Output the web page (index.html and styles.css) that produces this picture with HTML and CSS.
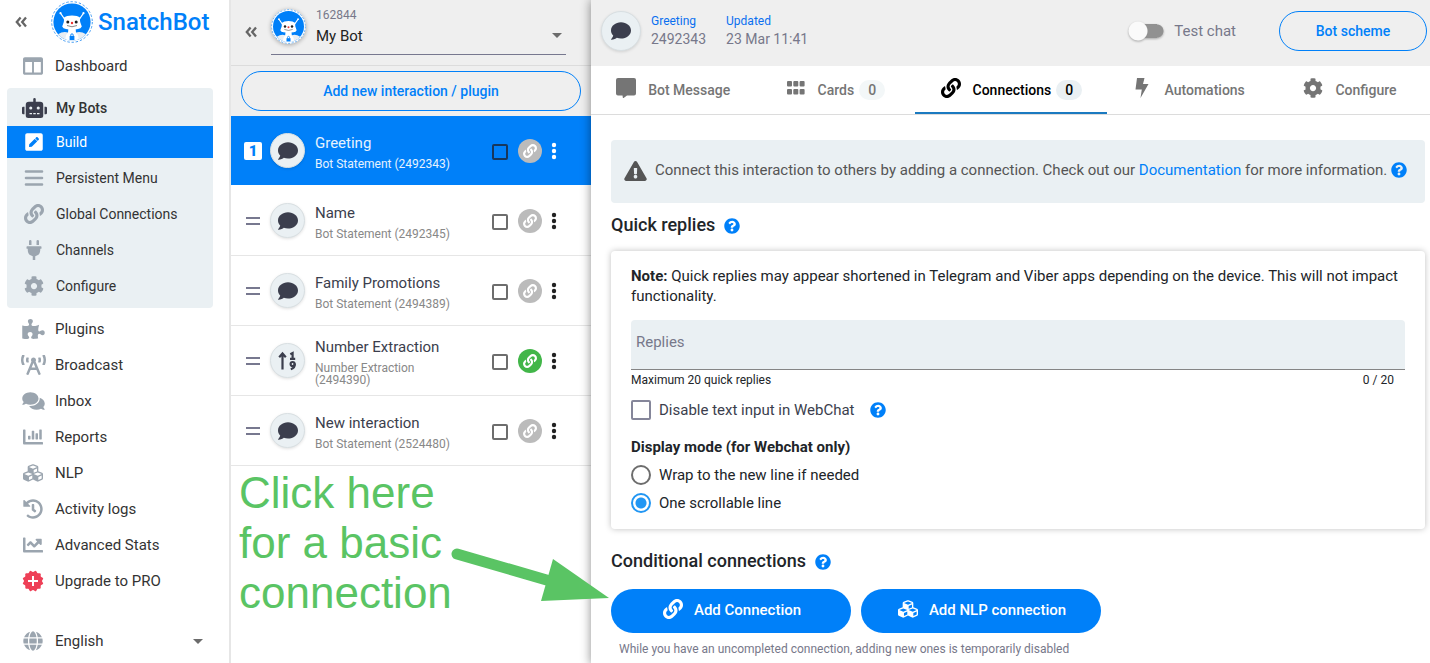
FILE: index.html
```html
<!DOCTYPE html>
<html lang="en">
<head>
<meta charset="utf-8">
<title>SnatchBot – Connections</title>
<link rel="stylesheet" href="styles.css">
</head>
<body>
<svg class="sprite" aria-hidden="true">
  <symbol id="logo" viewBox="0 0 42 42">
    <circle cx="21" cy="21" r="20.300" fill="#fff" stroke="#2b8ff0" stroke-width=".9" stroke-dasharray="2.400 1.850"/>
    <circle cx="21" cy="21" r="18.600" fill="#0080f9"/>
    <path d="M7 33.200Q12 30 17 31.500L25 31.500Q30 30 35 33.200Q29.500 39.600 21 39.600T7 33.200Z" fill="#e9eef3"/>
    <path d="M17.500 26h7l.5 6Q27.500 33 27.500 38Q24.500 39.600 21 39.600T14.500 38Q14.500 33 17 32Z" fill="#fff"/>
    <path d="M13.500 18L9.700 12.500M28.500 18L32.300 12.500" stroke="#fff" stroke-width="1.300"/>
    <circle cx="9.500" cy="12.200" r="1.100" fill="#fff"/><circle cx="32.500" cy="12.200" r="1.100" fill="#fff"/>
    <path d="M12.800 16.800Q15.500 14.500 21 14.500T29.200 16.800Q28.800 19 29.200 21L30.800 25.500Q30 27.800 27 28Q21 29 15 28Q12 27.800 11.200 25.500L12.800 21Q13.200 19 12.800 16.800Z" fill="#fff"/>
    <circle cx="16.800" cy="21" r="1.500" fill="#222"/><circle cx="25.200" cy="21" r="1.500" fill="#222"/>
    <circle cx="21" cy="22" r="1.200" fill="#e33"/>
    <path d="M16 24.500Q21 27 26 24.500" fill="none" stroke="#555" stroke-width=".7"/>
    <rect x="18.600" y="35" width="4.800" height="4" fill="#0080f9"/><path d="M19.800 35v-1a1.200 1.200 0 0 1 2.400 0V35" fill="none" stroke="#0080f9" stroke-width=".9"/>
  </symbol>
  <symbol id="collapse" viewBox="0 0 12 12"><path d="M5.600 1.500L1.800 6l3.800 4.500M11 1.500L7.200 6l3.800 4.500" fill="none" stroke="currentColor" stroke-width="2.300"/></symbol>
  <symbol id="caret" viewBox="0 0 10 5"><path d="M0 0h10L5 5z" fill="currentColor"/></symbol>
  <symbol id="columns" viewBox="0 0 512 512"><path fill="currentColor" d="M464 32H48C21.490 32 0 53.490 0 80v352c0 26.510 21.490 48 48 48h416c26.510 0 48-21.490 48-48V80c0-26.510-21.490-48-48-48zM232 424H56V152h176v272zm224 0H280V152h176v272z"/></symbol>
  <symbol id="robot" viewBox="0 0 640 512"><path fill="currentColor" d="M32 224H64V416H32A32 32 0 0 1 0 384V256A32 32 0 0 1 32 224ZM544 176V448a64 64 0 0 1-64 64H160a64 64 0 0 1-64-64V176a80 80 0 0 1 80-80H288V32a32 32 0 0 1 64 0V96H464A80 80 0 0 1 544 176ZM264 256a40 40 0 1 0-40 40A40 40 0 0 0 264 256Zm-8 128H192v32h64Zm96 0H288v32h64ZM456 256a40 40 0 1 0-40 40A40 40 0 0 0 456 256Zm-8 128H384v32h64ZM640 256V384a32 32 0 0 1-32 32H576V224h32A32 32 0 0 1 640 256Z"/></symbol>
  <symbol id="pen" viewBox="0 0 448 512"><path fill="currentColor" d="M400 480H48c-26.500 0-48-21.500-48-48V80c0-26.500 21.500-48 48-48h352c26.500 0 48 21.500 48 48v352c0 26.500-21.500 48-48 48zM238.100 177.900L102.400 313.600l-6.300 57.100c-.8 7.600 5.600 14.100 13.300 13.300l57.100-6.300L302.200 242c2.300-2.300 2.300-6.100 0-8.500L246.700 178c-2.500-2.400-6.300-2.400-8.600-.1zM345 165.100L314.900 135c-9.400-9.400-24.600-9.400-33.900 0l-23.100 23.100c-2.300 2.300-2.300 6.100 0 8.500l55.500 55.500c2.300 2.300 6.100 2.300 8.500 0L345 199c9.300-9.300 9.300-24.500 0-33.900z"/></symbol>
  <symbol id="bars" viewBox="0 0 20 20"><path d="M2 3.500h16M2 10h16M2 16.500h16" stroke="currentColor" stroke-width="2.600" stroke-linecap="round"/></symbol>
  <symbol id="link" viewBox="0 0 512 512"><path fill="currentColor" d="M326.612 185.391c59.747 59.809 58.927 155.698.36 214.590-.11.120-.24.250-.36.370l-67.200 67.200c-59.270 59.270-155.699 59.262-214.960 0-59.270-59.260-59.270-155.700 0-214.960l37.106-37.106c9.840-9.840 26.786-3.300 27.294 10.606.648 17.722 3.826 35.527 9.690 52.721 1.986 5.822.567 12.262-3.783 16.612l-13.087 13.087c-28.026 28.026-28.905 73.660-1.155 101.960 28.024 28.579 74.086 28.749 102.325.510l67.200-67.190c28.191-28.191 28.073-73.757 0-101.830-3.701-3.694-7.429-6.564-10.341-8.569a16.037 16.037 0 0 1-6.947-12.606c-.396-10.567 3.348-21.456 11.698-29.806l21.054-21.055c5.521-5.521 14.182-6.199 20.584-1.731a152.482 152.482 0 0 1 20.522 17.197zM467.547 44.449c-59.261-59.262-155.690-59.270-214.960 0l-67.200 67.200c-.12.120-.25.250-.36.370-58.566 58.892-59.387 154.781.360 214.590a152.454 152.454 0 0 0 20.521 17.196c6.402 4.468 15.064 3.789 20.584-1.731l21.054-21.055c8.350-8.350 12.094-19.239 11.698-29.806a16.037 16.037 0 0 0-6.947-12.606c-2.912-2.005-6.640-4.875-10.341-8.569-28.073-28.073-28.191-73.639 0-101.830l67.200-67.190c28.239-28.239 74.300-28.069 102.325.510 27.750 28.300 26.872 73.934-1.155 101.960l-13.087 13.087c-4.350 4.350-5.769 10.790-3.783 16.612 5.864 17.194 9.042 34.999 9.690 52.721.509 13.906 17.454 20.446 27.294 10.606l37.106-37.106c59.271-59.259 59.271-155.699.001-214.959z"/></symbol>
  <symbol id="plug" viewBox="0 0 384 512"><path fill="currentColor" d="M320 32a32 32 0 0 0-64 0v96h64Zm48 128H16A16 16 0 0 0 0 176v32a16 16 0 0 0 16 16H32v32A160 160 0 0 0 160 412.800V512h64V412.800A160 160 0 0 0 352 256V224h16a16 16 0 0 0 16-16V176A16 16 0 0 0 368 160ZM128 32a32 32 0 0 0-64 0v96h64Z"/></symbol>
  <symbol id="cog" viewBox="0 0 512 512"><path fill="currentColor" d="M487.400 315.700l-42.600-24.600c4.300-23.200 4.300-47 0-70.200l42.600-24.600c4.900-2.800 7.100-8.600 5.500-14-11.100-35.600-30-67.800-54.700-94.600-3.800-4.100-10-5.100-14.800-2.300L380.800 110c-17.900-15.400-38.500-27.300-60.800-35.100V25.800c0-5.600-3.900-10.500-9.400-11.700-36.700-8.200-74.300-7.800-109.200 0-5.500 1.200-9.400 6.100-9.400 11.700V75c-22.200 7.900-42.800 19.800-60.800 35.100L88.700 85.500c-4.900-2.800-11-1.900-14.800 2.300-24.700 26.700-43.600 58.900-54.700 94.600-1.700 5.400.6 11.200 5.500 14L67.300 221c-4.300 23.200-4.300 47 0 70.200l-42.600 24.600c-4.900 2.800-7.100 8.600-5.500 14 11.100 35.600 30 67.800 54.700 94.600 3.800 4.100 10 5.100 14.800 2.300l42.600-24.600c17.900 15.400 38.500 27.300 60.800 35.100v49.200c0 5.600 3.900 10.500 9.400 11.700 36.700 8.200 74.300 7.800 109.200 0 5.500-1.200 9.400-6.100 9.400-11.700v-49.200c22.200-7.900 42.800-19.800 60.800-35.100l42.600 24.600c4.900 2.800 11 1.900 14.800-2.300 24.700-26.700 43.600-58.900 54.700-94.600 1.500-5.500-.7-11.300-5.600-14.100zM256 336c-44.100 0-80-35.900-80-80s35.900-80 80-80 80 35.900 80 80-35.900 80-80 80z"/></symbol>
  <symbol id="puzzle" viewBox="0 0 576 512"><path fill="currentColor" d="M519.442 288.651c-41.519 0-59.500 31.593-82.058 31.593C377.409 320.244 432 144 432 144s-196.288 80-196.288-3.297c0-35.827 36.288-46.250 36.288-85.985C272 19.216 243.885 0 210.539 0c-34.654 0-66.366 18.891-66.366 56.346 0 41.364 31.711 59.277 31.711 81.750C175.885 207.719 0 166.758 0 166.758v333.237s178.635 41.047 178.635-28.662c0-22.473-40-40.107-40-81.471 0-37.456 29.250-56.346 63.577-56.346 33.673 0 61.788 19.216 61.788 54.717 0 39.735-36.288 50.158-36.288 85.985 0 60.803 129.675 25.730 181.230 25.730 0 0-34.725-120.101 25.827-120.101 35.962 0 46.423 36.152 86.308 36.152C556.712 416 576 387.990 576 354.443c0-34.199-18.962-65.792-56.558-65.792z"/></symbol>
  <symbol id="tower" viewBox="0 0 640 512"><path fill="currentColor" d="M150.940 192h33.730c11.010 0 18.610-10.830 14.860-21.180-4.930-13.580-7.550-27.980-7.550-42.820s2.620-29.240 7.550-42.820C203.290 74.830 195.680 64 184.670 64h-33.730c-7.010 0-13.460 4.490-15.410 11.230C130.640 92.210 128 109.880 128 128c0 18.120 2.640 35.790 7.540 52.760 1.940 6.740 8.390 11.240 15.400 11.240zM89.920 23.340C95.560 12.720 87.970 0 75.960 0H40.630c-6.270 0-12.140 3.590-14.740 9.310C9.400 45.540 0 85.650 0 128c0 24.750 3.120 68.330 26.690 118.860 2.620 5.630 8.420 9.140 14.610 9.140h34.840c12.020 0 19.610-12.740 13.950-23.370-49.780-93.320-16.710-178.150-.17-209.290zM614.060 9.290C611.460 3.580 605.600 0 599.330 0h-35.420c-11.980 0-19.660 12.660-14.020 23.250 18.270 34.290 48.420 119.420.280 209.230-5.720 10.680 1.800 23.520 13.910 23.520h35.230c6.270 0 12.130-3.580 14.730-9.290C630.570 210.480 640 170.360 640 128s-9.420-82.480-25.940-118.710zM489.060 64h-33.730c-11.010 0-18.610 10.830-14.860 21.180 4.930 13.580 7.550 27.980 7.550 42.820s-2.620 29.240-7.550 42.820c-3.760 10.350 3.850 21.180 14.860 21.180h33.730c7.020 0 13.460-4.490 15.410-11.240 4.900-16.970 7.530-34.640 7.530-52.760 0-18.120-2.640-35.790-7.540-52.760-1.940-6.750-8.390-11.240-15.400-11.240zm-116.300 100.120c7.050-10.290 11.200-22.710 11.200-36.120 0-35.350-28.630-64-63.960-64-35.320 0-63.960 28.650-63.960 64 0 13.410 4.150 25.830 11.200 36.120l-130.500 313.410c-3.400 8.150.460 17.520 8.610 20.920l29.510 12.310c8.150 3.400 17.520-.46 20.910-8.610L244.960 384h150.070l49.200 118.150c3.400 8.160 12.760 12.010 20.910 8.610l29.510-12.310c8.150-3.400 12-12.770 8.610-20.920l-130.500-313.410zM271.620 320L320 203.810 368.380 320h-96.760z"/></symbol>
  <symbol id="comments" viewBox="0 0 576 512"><path fill="currentColor" d="M416 192c0-88.400-93.100-160-208-160S0 103.600 0 192c0 34.300 14.100 65.900 38 92-13.400 30.200-35.500 54.200-35.800 54.500-2.200 2.300-2.800 5.700-1.500 8.700S4.800 352 8 352c36.600 0 66.900-12.300 88.700-25 32.200 15.700 70.300 25 111.300 25 114.900 0 208-71.600 208-160zm122 220c23.900-26 38-57.700 38-92 0-66.900-53.500-124.200-129.300-148.100.9 6.600 1.300 13.300 1.300 20.100 0 105.900-107.700 192-240 192-10.800 0-21.300-.8-31.700-1.900C207.800 439.600 281.800 480 368 480c41 0 79.100-9.200 111.300-25 21.800 12.700 52.100 25 88.700 25 3.200 0 6.100-1.900 7.300-4.800 1.300-2.900.7-6.300-1.500-8.700-.3-.3-22.400-24.200-35.800-54.500z"/></symbol>
  <symbol id="chart" viewBox="0 0 512 512"><path fill="currentColor" d="M332.800 320h38.400c6.400 0 12.800-6.400 12.800-12.800V172.800c0-6.400-6.400-12.800-12.800-12.800h-38.400c-6.400 0-12.800 6.400-12.800 12.800v134.400c0 6.400 6.400 12.800 12.800 12.800zm96 0h38.400c6.400 0 12.800-6.400 12.800-12.800V76.800c0-6.400-6.400-12.800-12.800-12.800h-38.400c-6.400 0-12.800 6.400-12.800 12.800v230.400c0 6.400 6.400 12.800 12.800 12.800zm-288 0h38.400c6.400 0 12.800-6.400 12.800-12.800v-70.400c0-6.400-6.400-12.800-12.800-12.800h-38.400c-6.400 0-12.800 6.400-12.800 12.800v70.400c0 6.400 6.400 12.800 12.800 12.800zm96 0h38.400c6.400 0 12.800-6.400 12.800-12.800V108.800c0-6.400-6.400-12.800-12.800-12.800h-38.400c-6.400 0-12.800 6.400-12.800 12.800v198.400c0 6.400 6.400 12.800 12.800 12.800zM496 384H64V80c0-8.840-7.160-16-16-16H16C7.160 64 0 71.160 0 80v336c0 17.670 14.330 32 32 32h464c8.840 0 16-7.160 16-16v-32c0-8.840-7.160-16-16-16z"/></symbol>
  <symbol id="trend" viewBox="0 0 512 512"><path fill="currentColor" d="M496 384H64V80c0-8.840-7.160-16-16-16H16C7.160 64 0 71.160 0 80v336c0 17.670 14.330 32 32 32h464c8.840 0 16-7.160 16-16v-32c0-8.840-7.160-16-16-16zM464 96H345.940c-21.380 0-32.090 25.850-16.970 40.970l32.400 32.400L288 242.750l-73.370-73.370c-12.500-12.500-32.760-12.500-45.250 0l-68.690 68.690c-6.250 6.250-6.250 16.380 0 22.630l22.620 22.620c6.250 6.250 16.380 6.250 22.630 0L192 237.250l73.370 73.370c12.500 12.500 32.760 12.500 45.250 0l96-96 32.400 32.400c15.120 15.120 40.970 4.410 40.970-16.970V112c.010-8.840-7.150-16-15.990-16z"/></symbol>
  <symbol id="cubes" viewBox="0 0 512 512"><path fill="currentColor" d="M488.600 250.200L392 214V105.500c0-15-9.300-28.400-23.400-33.700l-100-37.500c-8.100-3.100-17.100-3.100-25.300 0l-100 37.500c-14.100 5.300-23.400 18.700-23.400 33.700V214l-96.600 36.200C9.300 255.500 0 268.900 0 283.900V394c0 13.600 7.700 26.100 19.900 32.200l100 50c10.100 5.100 22.100 5.100 32.200 0l103.900-52 103.900 52c10.100 5.100 22.100 5.100 32.200 0l100-50c12.200-6.100 19.900-18.600 19.900-32.200V283.900c0-15-9.300-28.400-23.400-33.700zM358 214.800l-85 31.900v-68.200l85-37v73.300zM154 104.100l102-38.200 102 38.200v.6l-102 41.400-102-41.400v-.6zm84 291.100l-85 42.500v-79.100l85-38.800v75.400zm0-112l-102 41.400-102-41.400v-.6l102-38.200 102 38.200v.6zm240 112l-85 42.500v-79.100l85-38.800v75.400zm0-112l-102 41.400-102-41.400v-.6l102-38.200 102 38.200v.6z"/></symbol>
  <symbol id="history" viewBox="0 0 512 512"><path fill="currentColor" d="M504 255.531c.253 136.640-111.180 248.372-247.820 248.468-59.015.042-113.223-20.530-155.822-54.911-11.077-8.940-11.905-25.541-1.839-35.607l11.267-11.267c8.609-8.609 22.353-9.551 31.891-1.984C173.062 425.135 212.781 440 256 440c101.705 0 184-82.311 184-184 0-101.705-82.311-184-184-184-48.814 0-93.149 18.969-126.068 49.932l50.754 50.754c10.080 10.080 2.941 27.314-11.313 27.314H24c-8.837 0-16-7.163-16-16V38.627c0-14.254 17.234-21.393 27.314-11.314l49.372 49.372C129.209 34.136 189.552 8 256 8c136.810 0 247.747 110.780 248 247.531zm-180.912 78.784l9.823-12.630c8.138-10.463 6.253-25.542-4.210-33.679L288 256.349V152c0-13.255-10.745-24-24-24h-16c-13.255 0-24 10.745-24 24v135.651l65.409 50.874c10.463 8.137 25.541 6.253 33.679-4.210z"/></symbol>
  <symbol id="pro" viewBox="0 0 22 22"><g fill="#ee4057"><rect x="3.300" y="3.300" width="15.400" height="15.400" rx="1"/><rect x="3.300" y="3.300" width="15.400" height="15.400" rx="1" transform="rotate(30 11 11)"/><rect x="3.300" y="3.300" width="15.400" height="15.400" rx="1" transform="rotate(60 11 11)"/></g><path d="M11 6v10M6 11h10" stroke="#fff" stroke-width="2"/></symbol>
  <symbol id="globe" viewBox="0 0 496 512"><path fill="currentColor" d="M336.500 160C322 70.700 287.800 8 248 8s-74 62.700-88.500 152h177zM152 256c0 22.200 1.200 43.500 3.300 64h185.300c2.100-20.500 3.300-41.800 3.300-64s-1.200-43.500-3.300-64H155.300c-2.100 20.500-3.300 41.800-3.300 64zm324.700-96c-28.600-67.900-86.500-120.400-158-141.600 24.400 33.800 41.200 84.700 50 141.600h108zM177.200 18.400C105.800 39.600 47.800 92.100 19.300 160h108c8.700-56.900 25.500-107.800 49.900-141.600zM487.400 192H372.700c2.100 21 3.300 42.500 3.300 64s-1.200 43-3.300 64h114.600c5.500-20.500 8.600-41.800 8.600-64s-3.100-43.500-8.500-64zM120 256c0-21.500 1.200-43 3.300-64H8.600C3.200 212.500 0 233.800 0 256s3.200 43.500 8.600 64h114.600c-2-21-3.200-42.500-3.200-64zm39.500 96c14.500 89.300 48.700 152 88.500 152s74-62.700 88.500-152h-177zm159.300 141.600c71.400-21.200 129.400-73.700 158-141.600h-108c-8.800 56.900-25.600 107.800-50 141.600zM19.300 352c28.600 67.900 86.500 120.400 158 141.600-24.400-33.800-41.200-84.700-50-141.600h-108z"/></symbol>
  <symbol id="comment" viewBox="0 0 512 512"><path fill="currentColor" d="M256 32C114.600 32 0 125.100 0 240c0 49.600 21.400 95 57 130.700C44.500 421.100 2.700 466 2.200 466.500c-2.200 2.300-2.800 5.700-1.500 8.700S4.800 480 8 480c66.300 0 116-31.800 140.600-51.400 32.700 12.300 69 19.400 107.400 19.400 141.400 0 256-93.100 256-208S397.400 32 256 32z"/></symbol>
  <symbol id="sort" viewBox="0 0 20 20"><path d="M4.500 18.500V3.500M1.200 6.200L4.500 2.500 7.800 6.200" fill="none" stroke="currentColor" stroke-width="2.200"/><path d="M12.300 3.200L14.600 2V7.600M12 7.800h5.200" fill="none" stroke="currentColor" stroke-width="2.200"/><circle cx="14.600" cy="13" r="2" fill="none" stroke="currentColor" stroke-width="2.200"/><path d="M16.800 12.500Q17 17 12.800 18.200" fill="none" stroke="currentColor" stroke-width="2.200"/></symbol>
  <symbol id="drag" viewBox="0 0 14 10"><path d="M0 2h14M0 8h14" stroke="currentColor" stroke-width="2"/></symbol>
  <symbol id="dots" viewBox="0 0 6 18"><circle cx="3" cy="3" r="2.200" fill="currentColor"/><circle cx="3" cy="9" r="2.200" fill="currentColor"/><circle cx="3" cy="15" r="2.200" fill="currentColor"/></symbol>
  <symbol id="message" viewBox="0 0 20 20"><path fill="currentColor" d="M2 0h16a2 2 0 0 1 2 2v13.500a2 2 0 0 1-2 2h-7L7 20.500 6.500 17.500H2a2 2 0 0 1-2-2V2a2 2 0 0 1 2-2z"/></symbol>
  <symbol id="grid" viewBox="0 0 18 14"><g fill="currentColor"><rect y="0" width="5" height="5.500" rx="1"/><rect x="6.300" width="5" height="5.500" rx="1"/><rect x="12.600" width="5" height="5.500" rx="1"/><rect y="8" width="5" height="5.500" rx="1"/><rect x="6.300" y="8" width="5" height="5.500" rx="1"/><rect x="12.600" y="8" width="5" height="5.500" rx="1"/></g></symbol>
  <symbol id="bolt" viewBox="0 0 14 20"><path fill="currentColor" d="M2 0h7.500L8 6h5.500L5.500 20l1.300-8.500H.5z"/></symbol>
  <symbol id="help" viewBox="0 0 512 512"><path fill="currentColor" d="M504 256c0 136.997-111.043 248-248 248S8 392.997 8 256C8 119.083 119.043 8 256 8s248 111.083 248 248zM262.655 90c-54.497 0-89.255 22.957-116.549 63.758-3.536 5.286-2.353 12.415 2.715 16.258l34.699 26.310c5.205 3.947 12.621 3.008 16.665-2.122 17.864-22.658 30.113-35.797 57.303-35.797 20.429 0 45.698 13.148 45.698 32.958 0 14.976-12.363 22.667-32.534 33.976C247.128 238.528 216 254.941 216 296v4c0 6.627 5.373 12 12 12h56c6.627 0 12-5.373 12-12v-1.333c0-28.462 83.186-29.647 83.186-106.667 0-58.002-60.165-102-116.531-102zM256 338c-25.365 0-46 20.635-46 46 0 25.364 20.635 46 46 46s46-20.636 46-46c0-25.365-20.635-46-46-46z"/></symbol>
  <symbol id="warning" viewBox="0 0 576 512"><path fill="currentColor" d="M569.517 440.013C587.975 472.007 564.806 512 527.940 512H48.054c-36.937 0-59.999-40.055-41.577-71.987L246.423 23.985c18.467-32.009 64.720-31.951 83.154 0l239.940 416.028zM288 354c-25.405 0-46 20.595-46 46s20.595 46 46 46 46-20.595 46-46-20.595-46-46-46zm-43.673-165.346l7.418 136c.347 6.364 5.609 11.346 11.982 11.346h48.546c6.373 0 11.635-4.982 11.982-11.346l7.418-136c.375-6.874-5.098-12.654-11.982-12.654h-63.383c-6.884 0-12.356 5.780-11.981 12.654z"/></symbol>
</svg>

<div class="app">
  <nav class="sidebar" aria-label="Main">
    <div class="brand">
      <button class="icon-btn" aria-label="Collapse menu"><svg class="i12"><use href="#collapse"/></svg></button>
      <a class="brand-link" href="#"><svg class="i42"><use href="#logo"/></svg><span>SnatchBot</span></a>
    </div>
    <a class="nav-item" href="#"><span class="nav-icon"><svg class="i20"><use href="#columns"/></svg></span>Dashboard</a>
    <div class="nav-group">
      <a class="sub-item sub-head" href="#"><span class="nav-icon"><svg class="i25"><use href="#robot"/></svg></span>My Bots</a>
      <a class="sub-item sub-active" href="#"><span class="nav-icon"><svg class="i20"><use href="#pen"/></svg></span>Build</a>
      <a class="sub-item" href="#"><span class="nav-icon"><svg class="i20"><use href="#bars"/></svg></span>Persistent Menu</a>
      <a class="sub-item" href="#"><span class="nav-icon"><svg class="i20"><use href="#link"/></svg></span>Global Connections</a>
      <a class="sub-item" href="#"><span class="nav-icon"><svg class="i20"><use href="#plug"/></svg></span>Channels</a>
      <a class="sub-item" href="#"><span class="nav-icon"><svg class="i20"><use href="#cog"/></svg></span>Configure</a>
    </div>
    <a class="nav-item" href="#"><span class="nav-icon"><svg class="i23"><use href="#puzzle"/></svg></span>Plugins</a>
    <a class="nav-item" href="#"><span class="nav-icon"><svg class="i25"><use href="#tower"/></svg></span>Broadcast</a>
    <a class="nav-item" href="#"><span class="nav-icon"><svg class="i23"><use href="#comments"/></svg></span>Inbox</a>
    <a class="nav-item" href="#"><span class="nav-icon"><svg class="i20"><use href="#chart"/></svg></span>Reports</a>
    <a class="nav-item" href="#"><span class="nav-icon"><svg class="i20"><use href="#cubes"/></svg></span>NLP</a>
    <a class="nav-item" href="#"><span class="nav-icon"><svg class="i20"><use href="#history"/></svg></span>Activity logs</a>
    <a class="nav-item" href="#"><span class="nav-icon"><svg class="i20"><use href="#trend"/></svg></span>Advanced Stats</a>
    <a class="nav-item" href="#"><span class="nav-icon"><svg class="i22"><use href="#pro"/></svg></span>Upgrade to PRO</a>
    <div class="nav-item language">
      <span class="nav-icon"><svg class="i20"><use href="#globe"/></svg></span>
      <select class="plain-select" aria-label="Language"><option>English</option></select>
      <svg class="caret"><use href="#caret"/></svg>
    </div>
  </nav>

  <section class="flow" aria-label="Interactions">
    <header class="flow-head">
      <button class="icon-btn" aria-label="Collapse list"><svg class="i12"><use href="#collapse"/></svg></button>
      <div class="bot-picker">
        <svg class="bot-avatar"><use href="#logo"/></svg>
        <div class="bot-name">
          <label for="bot">162844</label>
          <select class="plain-select" id="bot"><option>My Bot</option></select>
        </div>
        <svg class="caret"><use href="#caret"/></svg>
      </div>
    </header>
    <div class="flow-add"><button class="outline-btn">Add new interaction / plugin</button></div>
    <ul class="steps">
      <li class="step step-active">
        <span class="step-lead"><span class="step-num">1</span></span>
        <span class="avatar"><svg class="i20"><use href="#comment"/></svg></span>
        <div class="step-text"><h3>Greeting</h3><p>Bot Statement (2492343)</p></div>
        <input class="check" type="checkbox" aria-label="Select Greeting">
        <button class="link-btn" aria-label="Connections"><svg class="i14"><use href="#link"/></svg></button>
        <button class="more-btn" aria-label="More"><svg class="dots"><use href="#dots"/></svg></button>
      </li>
      <li class="step">
        <span class="step-lead"><svg class="drag"><use href="#drag"/></svg></span>
        <span class="avatar"><svg class="i20"><use href="#comment"/></svg></span>
        <div class="step-text"><h3>Name</h3><p>Bot Statement (2492345)</p></div>
        <input class="check" type="checkbox" aria-label="Select Name">
        <button class="link-btn" aria-label="Connections"><svg class="i14"><use href="#link"/></svg></button>
        <button class="more-btn" aria-label="More"><svg class="dots"><use href="#dots"/></svg></button>
      </li>
      <li class="step">
        <span class="step-lead"><svg class="drag"><use href="#drag"/></svg></span>
        <span class="avatar"><svg class="i20"><use href="#comment"/></svg></span>
        <div class="step-text"><h3>Family Promotions</h3><p>Bot Statement (2494389)</p></div>
        <input class="check" type="checkbox" aria-label="Select Family Promotions">
        <button class="link-btn" aria-label="Connections"><svg class="i14"><use href="#link"/></svg></button>
        <button class="more-btn" aria-label="More"><svg class="dots"><use href="#dots"/></svg></button>
      </li>
      <li class="step">
        <span class="step-lead"><svg class="drag"><use href="#drag"/></svg></span>
        <span class="avatar"><svg class="i20"><use href="#sort"/></svg></span>
        <div class="step-text"><h3>Number Extraction</h3><p>Number Extraction (2494390)</p></div>
        <input class="check" type="checkbox" aria-label="Select Number Extraction">
        <button class="link-btn link-on" aria-label="Connections"><svg class="i14"><use href="#link"/></svg></button>
        <button class="more-btn" aria-label="More"><svg class="dots"><use href="#dots"/></svg></button>
      </li>
      <li class="step">
        <span class="step-lead"><svg class="drag"><use href="#drag"/></svg></span>
        <span class="avatar"><svg class="i20"><use href="#comment"/></svg></span>
        <div class="step-text"><h3>New interaction</h3><p>Bot Statement (2524480)</p></div>
        <input class="check" type="checkbox" aria-label="Select New interaction">
        <button class="link-btn" aria-label="Connections"><svg class="i14"><use href="#link"/></svg></button>
        <button class="more-btn" aria-label="More"><svg class="dots"><use href="#dots"/></svg></button>
      </li>
    </ul>
    <div class="callout">
      <p>Click here<br>for a basic<br>connection</p>
      <svg class="arrow" viewBox="0 0 160 60" aria-hidden="true"><path d="M7 9L100 36" stroke="#5ac464" stroke-width="11" stroke-linecap="round"/><path d="M103 14L159 53 91 56z" fill="#5ac464"/></svg>
    </div>
  </section>

  <main class="editor">
    <header class="editor-head">
      <span class="avatar avatar-lg"><svg class="i20"><use href="#comment"/></svg></span>
      <div class="meta"><span class="meta-key">Greeting</span><span>2492343</span></div>
      <div class="meta"><span class="meta-key">Updated</span><span>23 Mar 11:41</span></div>
      <label class="switch"><input type="checkbox">Test chat</label>
      <button class="outline-btn scheme">Bot scheme</button>
    </header>
    <nav class="tabs" aria-label="Interaction">
      <a class="tab" href="#"><svg class="tab-icon"><use href="#message"/></svg>Bot Message</a>
      <a class="tab" href="#"><svg class="tab-icon tab-grid"><use href="#grid"/></svg>Cards<span class="count">0</span></a>
      <a class="tab tab-active" href="#"><svg class="tab-icon"><use href="#link"/></svg>Connections<span class="count">0</span></a>
      <a class="tab" href="#"><svg class="tab-icon"><use href="#bolt"/></svg>Automations</a>
      <a class="tab" href="#"><svg class="tab-icon"><use href="#cog"/></svg>Configure</a>
    </nav>
    <div class="content">
      <div class="info">
        <svg class="warn"><use href="#warning"/></svg>
        <p>Connect this interaction to others by adding a connection. Check out our <a href="#">Documentation</a> for more information.</p>
        <button class="help" aria-label="Help"><svg class="i16"><use href="#help"/></svg></button>
      </div>
      <h2>Quick replies <button class="help" aria-label="Help"><svg class="i16"><use href="#help"/></svg></button></h2>
      <section class="card">
        <p class="note"><strong>Note:</strong> Quick replies may appear shortened in Telegram and Viber apps depending on the device. This will not impact functionality.</p>
        <input class="replies" type="text" placeholder="Replies" aria-label="Replies">
        <div class="hint"><span>Maximum 20 quick replies</span><span>0 / 20</span></div>
        <div class="option">
          <label><input class="check check-lg" type="checkbox">Disable text input in WebChat</label>
          <button class="help" aria-label="Help"><svg class="i16"><use href="#help"/></svg></button>
        </div>
        <fieldset>
          <legend>Display mode (for Webchat only)</legend>
          <label class="radio"><input type="radio" name="mode">Wrap to the new line if needed</label>
          <label class="radio"><input type="radio" name="mode" checked>One scrollable line</label>
        </fieldset>
      </section>
      <h2>Conditional connections <button class="help" aria-label="Help"><svg class="i16"><use href="#help"/></svg></button></h2>
      <div class="actions">
        <button class="primary-btn"><svg class="i20"><use href="#link"/></svg>Add Connection</button>
        <button class="primary-btn"><svg class="i20"><use href="#cubes"/></svg>Add NLP connection</button>
      </div>
      <p class="footnote">While you have an uncompleted connection, adding new ones is temporarily disabled</p>
    </div>
  </main>
</div>
</body>
</html>
```
FILE: styles.css
```css
* { box-sizing: border-box; }
body, h2, h3, p, ul, fieldset { margin: 0; padding: 0; }
body { font-family: Roboto, "Liberation Sans", sans-serif; font-size: 15px; line-height: 20px; color: #212529; background: #fff; overflow: hidden; }
button, input, select { font: inherit; color: inherit; margin: 0; }
button { border: 0; padding: 0; background: none; cursor: pointer; }
a { color: #0080f9; text-decoration: none; }
svg { display: block; flex: none; }

.sprite { position: absolute; width: 0; height: 0; }
.i12 { width: 12px; height: 12px; }
.i14 { width: 14px; height: 14px; }
.i16 { width: 16px; height: 16px; }
.i20 { width: 20px; height: 20px; }
.i22 { width: 22px; height: 22px; }
.i23 { width: 23px; height: 20px; }
.i25 { width: 25px; height: 20px; }
.i42 { width: 42px; height: 42px; }
.caret { width: 10px; height: 5px; color: #6b6b6b; pointer-events: none; }

.app { display: grid; grid-template-columns: 231px 360px minmax(0, 1fr); height: 100vh; }

.sidebar { border-right: 2px solid #e6e6e6; }
.brand { display: flex; align-items: center; gap: 24px; height: 44px; padding-left: 15px; margin-bottom: 4px; }
.brand-link { display: flex; align-items: center; gap: 5px; font-size: 24px; font-weight: 500; }
.icon-btn { color: #666; flex: none; }
.nav-item { display: flex; align-items: center; height: 36px; padding-left: 15px; color: #333; }
.nav-icon { display: flex; justify-content: center; width: 36px; margin-right: 4px; color: #9ba5af; flex: none; }
.nav-group { margin: 4px 16px 3px 7px; padding-bottom: 4px; border-radius: 4px; background: #eaf0f3; }
.sub-item { display: flex; align-items: center; height: 36px; padding-left: 9px; font-size: 14px; color: #333; }
.sub-head { height: 38px; padding-top: 2px; font-weight: 500; }
.sub-head .nav-icon { color: #3b3e4d; }
.sub-active { height: 32px; margin-bottom: 2px; background: #0080f9; color: #fff; }
.sub-active .nav-icon { color: #fff; }
.language { margin-top: 24px; padding-right: 26px; }
.plain-select { appearance: none; flex: 1; width: 100%; border: 0; padding: 0; background: transparent; }

.flow { background: #fff; }
.flow-head { display: flex; align-items: center; gap: 14px; height: 66px; padding: 0 25px 0 14px; border-bottom: 1px solid #dcdcdc; background: #efefef; }
.flow-head .icon-btn { margin-top: -2px; }
.bot-picker { display: flex; flex: 1; gap: 10px; height: 46px; margin-bottom: 2px; border-bottom: 1px solid #77788f; }
.bot-picker .caret { align-self: center; margin: 9px 4px 0 0; }
.bot-avatar { width: 35px; height: 35px; border-radius: 50%; box-shadow: 0 1px 4px rgba(0, 0, 0, .3); }
.bot-name { display: flex; flex: 1; flex-direction: column; }
.bot-name label { font-size: 12px; line-height: 12px; color: #77788a; }
.bot-name .plain-select { flex: none; height: 30px; color: #222; }
.flow-add { display: flex; padding: 5px 10px; background: #efefef; }
.outline-btn { flex: 1; height: 40px; border: 1px solid #0080f9; border-radius: 20px; color: #0080f9; font-size: 14px; font-weight: 500; }

.steps { list-style: none; }
.step { display: flex; align-items: center; height: 70px; padding-left: 11px; border-bottom: 1px solid #e6e6e6; }
.step-lead { display: flex; justify-content: center; width: 22px; margin-right: 6px; }
.step-num { width: 18px; border-radius: 2px; background: #fff; color: #0080f9; font-size: 15px; font-weight: 900; line-height: 18px; text-align: center; }
.drag { width: 14px; height: 10px; color: #77788f; }
.avatar { display: flex; align-items: center; justify-content: center; flex: none; width: 35px; height: 35px; border: 1px solid #d8dfe2; border-radius: 50%; background: #eaf0f3; color: #3b3e4d; box-shadow: 0 1px 3px rgba(0, 0, 0, .12); }
.step-text { flex: 1; padding: 3px 20px 0 10px; }
.step-text h3 { margin-bottom: 6px; font-size: 15px; font-weight: 400; line-height: 18px; color: #3b3e4d; }
.step-text p { font-size: 12px; line-height: 12px; color: #888; }
.check { appearance: none; flex: none; width: 16px; height: 16px; border: 2px solid #6d6d6d; border-radius: 2px; }
.step .check { margin-top: 2px; }
.link-btn { display: flex; align-items: center; justify-content: center; width: 24px; height: 24px; margin-left: 10px; border-radius: 50%; background: #bbb; color: #fff; }
.link-on { background: #42b649; }
.more-btn { margin: 0 34px 0 9px; color: #222; }
.dots { width: 6px; height: 18px; }
.step-active { background: #0080f9; border-color: #fff; }
.step-active h3, .step-active p { color: #e6f2fe; }
.step-active .more-btn { color: #fff; }
.step-active .check { border-color: #17375c; }

.callout { position: relative; padding: 2px 8px; font-family: "Liberation Sans", Arial, sans-serif; font-size: 44px; line-height: 50px; color: #5ac464; }
.arrow { position: absolute; z-index: 3; left: 219px; top: 79px; width: 160px; height: 60px; fill: none; }

.editor { position: relative; z-index: 1; background: #fff; box-shadow: 0 0 10px rgba(0, 0, 0, .45); }
.editor-head { display: flex; align-items: center; height: 66px; padding: 0 3px 4px 10px; background: #efefef; color: #77788a; }
.avatar-lg { width: 40px; height: 40px; }
.meta { display: flex; flex-direction: column; margin: 0 10px; padding-bottom: 2px; font-size: 14px; line-height: 18px; }
.meta-key { font-size: 12px; color: #0a6ff0; }
.switch { display: flex; align-items: center; gap: 10px; margin-left: auto; margin-right: 43px; }
.switch input { appearance: none; width: 36px; height: 20px; border-radius: 10px; background: radial-gradient(circle at 10px 10px, #fafafa 9px, transparent 10px), linear-gradient(#919191, #919191) 8px 3px / 21px 14px no-repeat, radial-gradient(circle at 29px 10px, #919191 6px, transparent 7px); filter: drop-shadow(0 1px 1px rgba(0, 0, 0, .3)); }
.scheme { flex: none; width: 148px; }

.tabs { display: flex; height: 49px; border-bottom: 1px solid #dcdcdc; }
.tab { display: flex; flex: 1 1 auto; align-items: center; justify-content: center; min-width: 160px; padding: 0 24px; font-size: 14px; font-weight: 500; color: #757575; }
.tab-icon { width: 20px; height: 20px; margin: 0 12px 4px 0; }
.tab-grid { height: 14px; margin-bottom: 5px; }
.tab-active { color: #000; box-shadow: inset 0 -2px #1b7ac0; }
.count { margin-left: 5px; padding: 0 9px; border-radius: 10px; background: #eaf0f3; }
.tab:not(.tab-active) .count { background: #f3f7f8; }

.content { padding: 25px 5px 0 20px; }
.info { display: flex; align-items: center; padding: 18px 18px 22px 13px; border-radius: 4px; background: #eaf0f3; color: #555; }
.info p { flex: 1; margin-left: 8px; }
.warn { width: 23px; height: 20px; margin-top: 3px; }
.help { color: #0080f9; }
h2 { display: flex; align-items: center; gap: 9px; padding: 12px 0 16px; font-size: 18px; font-weight: 500; }
h2 .help { padding-top: 2px; }
.card { padding: 15px 20px 16px; border-radius: 4px; background: #fff; box-shadow: 0 0 6px rgba(0, 0, 0, .25); }
.replies { display: block; width: 100%; height: 50px; margin-top: 14px; padding: 0 5px 5px; border: 0; border-bottom: 1px solid #858585; border-radius: 4px 4px 0 0; background: #eaf0f3; }
.replies::placeholder { color: #77788a; opacity: 1; }
.hint { display: flex; justify-content: space-between; padding-right: 11px; font-size: 12px; }
.option { display: flex; align-items: center; gap: 15px; margin-top: 10px; color: #3b3e4d; }
.option label, .radio { display: flex; align-items: center; gap: 8px; }
.check-lg { width: 20px; height: 20px; border-color: #85869a; }
fieldset { border: 0; }
legend { padding: 17px 0 0; font-weight: 700; }
.radio { margin-top: 8px; }
.radio input { appearance: none; width: 20px; height: 20px; border: 2px solid #6d6d6d; border-radius: 50%; }
.radio input:checked { border-color: #2196f3; background: radial-gradient(circle, #2196f3 5px, transparent 6px); }
.card + h2 { padding: 22px 0 18px; }
.actions { display: flex; gap: 10px; }
.primary-btn { display: flex; align-items: center; justify-content: center; gap: 11px; width: 240px; height: 44px; padding: 0 0 2px 2px; border-radius: 22px; background: #0080f9; color: #fff; font-weight: 500; }
.primary-btn svg { margin-bottom: 2px; }
.footnote { padding: 6px 8px; font-size: 12px; color: #77788a; }
```
